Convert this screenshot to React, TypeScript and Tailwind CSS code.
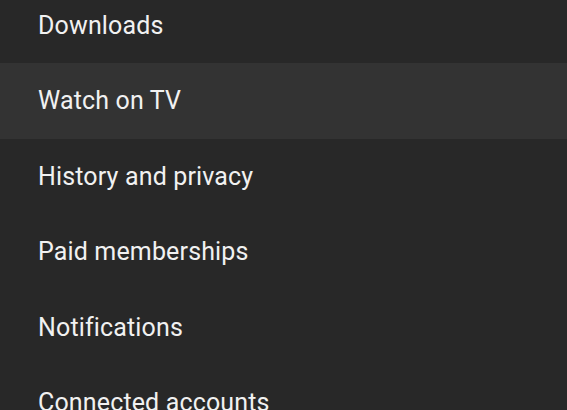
export default function App() {
  const items = [
    "Downloads",
    "Watch on TV",
    "History and privacy",
    "Paid memberships",
    "Notifications",
    "Connected accounts",
  ];
  return (
    <div className="w-[567px] h-[410px] overflow-hidden bg-[#282828]" style={{ fontFamily: "Roboto, 'Noto Sans', sans-serif" }}>
      <div className="-mt-[12.5px] flex flex-col">
        {items.map((t, i) => (
          <div
            key={t}
            className={`h-[75.5px] flex items-center pl-[38px] text-[25px] tracking-[0.15px] text-[#f1f1f1] ${i === 1 ? "bg-[#333333]" : ""}`}
          >
            {t}
          </div>
        ))}
      </div>
    </div>
  );
}
